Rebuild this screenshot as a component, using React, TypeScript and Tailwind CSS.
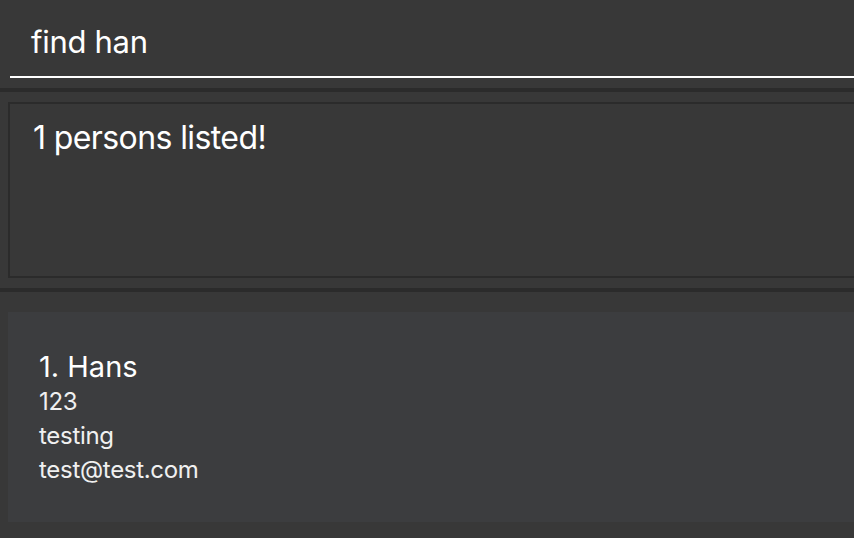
import React from "react";

export default function App() {
  const font = { fontFamily: "Inter, 'Noto Sans', sans-serif" };
  return (
    <div
      className="w-[854px] h-[538px] overflow-hidden bg-[#383838] flex flex-col text-white"
      style={font}
    >
      {/* command box */}
      <div className="h-[88px] pl-[10px] flex flex-col">
        <div className="h-[76px] flex items-center pl-[21px] pt-[8px] text-[31px] tracking-[-0.3px] text-white">
          find han
        </div>
        <div className="h-[2px] bg-white -mr-4" />
      </div>
      <div className="h-[4px] bg-[#2b2b2b]" />
      {/* result display */}
      <div className="h-[196px] pt-[10px] pl-[8px]">
        <div className="h-[176px] border-2 border-[#2b2b2b] -mr-4 pl-[23px] pt-[14px] text-[32px] leading-[40px] tracking-[-0.6px]">
          1 persons listed!
        </div>
      </div>
      <div className="h-[4px] bg-[#2b2b2b]" />
      {/* person list */}
      <div className="flex-1 pt-[20px] pl-[8px]">
        <div className="h-[210px] bg-[#3c3d3f] -mr-4 pl-[31px] pt-[38px] flex flex-col">
          <div className="text-[29px] leading-[34px] tracking-[0px] text-white">1. Hans</div>
          <div className="mt-[1px] text-[24px] leading-[34px] tracking-[-0.3px] text-[#f0f0f0]">123</div>
          <div className="text-[24px] leading-[34px] tracking-[-0.3px] text-[#f0f0f0]">testing</div>
          <div className="text-[24px] leading-[34px] tracking-[-0.3px] text-[#f0f0f0]">test@test.com</div>
        </div>
      </div>
    </div>
  );
}
